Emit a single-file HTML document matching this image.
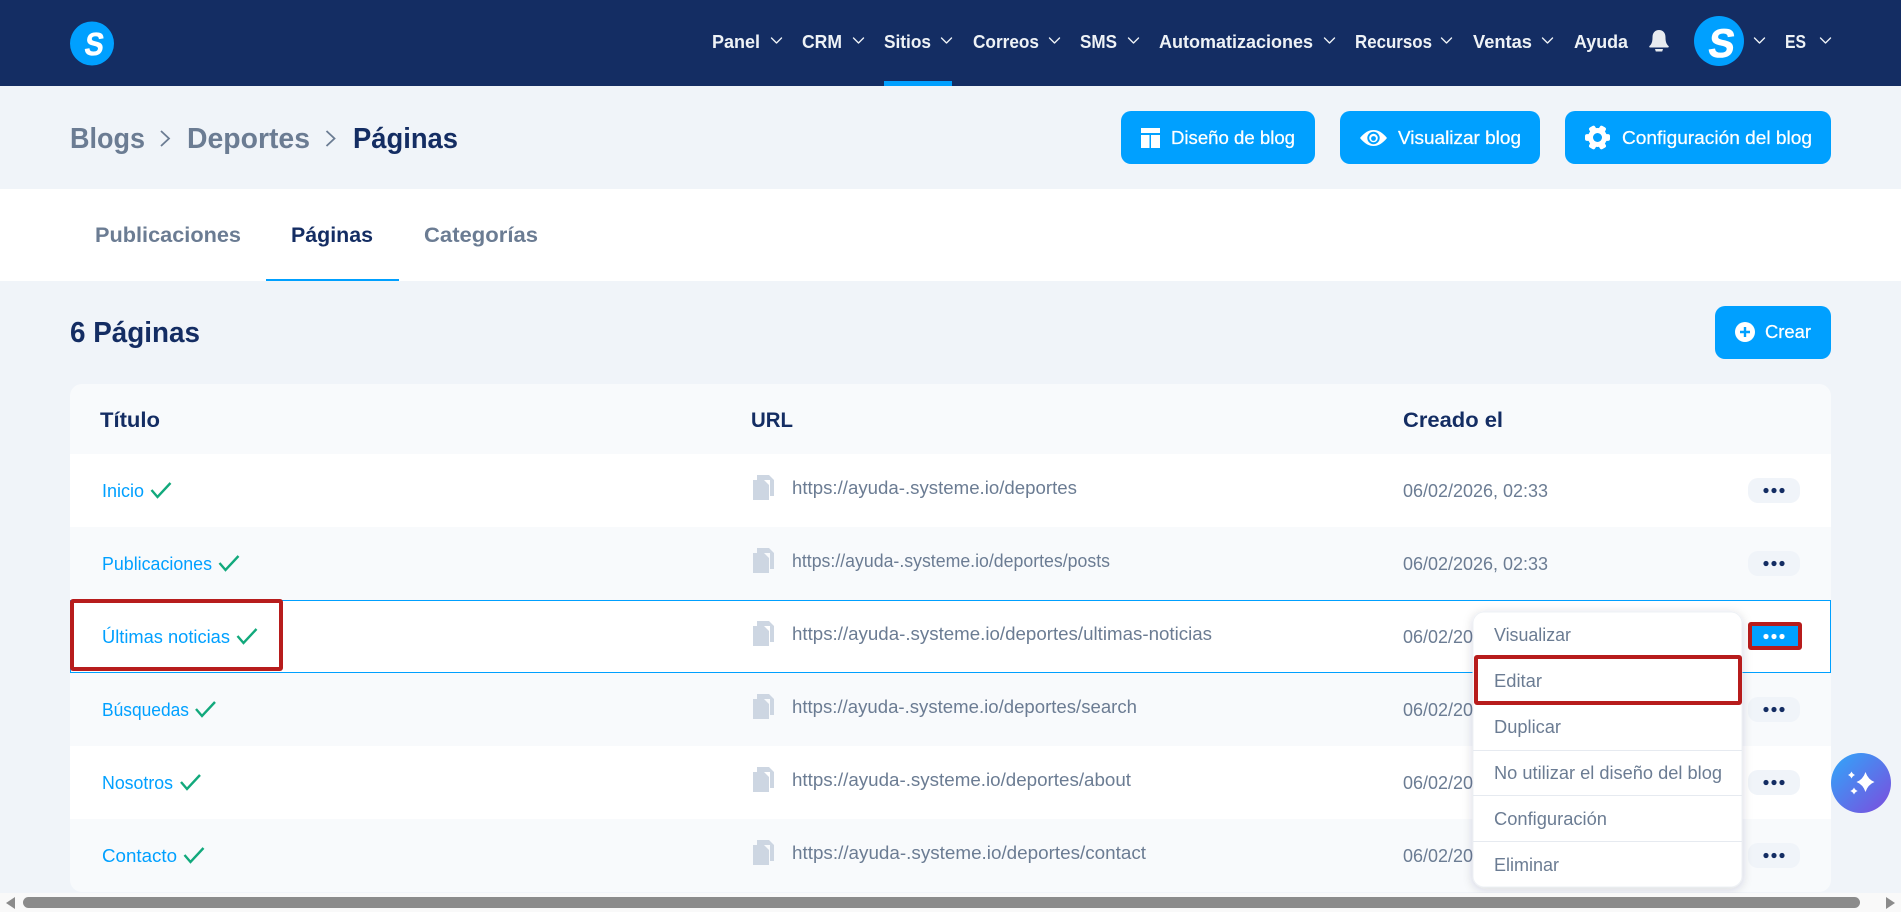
<!DOCTYPE html>
<html lang="es">
<head>
<meta charset="utf-8">
<title>Blogs - Deportes - Páginas</title>
<style>
html,body{margin:0;padding:0;width:1901px;height:912px;overflow:hidden;background:#f0f4f9}
svg{display:block}
text{font-family:"Liberation Sans",sans-serif;white-space:pre}
.nav{font-size:18px;font-weight:700;fill:#eef2f6}
.bc{font-size:29px;font-weight:700}
.g{fill:#6b7c93}
.d{fill:#142d63}
.btn{font-size:18px;fill:#fff;stroke:#fff;stroke-width:.25}
.tab{font-size:21px;font-weight:700}
.th{font-size:21px;font-weight:700;fill:#142d63}
.lnk{font-size:18px;fill:#00a0ff}
.url{font-size:18px;fill:#6b7c93}
.m{font-size:18px;fill:#6b7c93}
.chev{fill:none;stroke:#eef2f6;stroke-width:1.4;stroke-linecap:round;stroke-linejoin:round}
.ck{fill:none;stroke:#12a97c;stroke-width:2.4}
.c1{fill:#cdd6e2}
</style>
</head>
<body>
<svg width="1901" height="912" viewBox="0 0 1901 912" xmlns="http://www.w3.org/2000/svg">
<defs>
<filter id="sh" x="-10%" y="-10%" width="120%" height="120%"><feDropShadow dx="0" dy="2" stdDeviation="5" flood-color="#334" flood-opacity=".16"/></filter>
<linearGradient id="ai" x1="0" y1="0" x2="1" y2="1"><stop offset="0" stop-color="#2fa8fa"/><stop offset="1" stop-color="#7d4bdd"/></linearGradient>
<g id="cp"><path d="M757 475h12l5 5v16h-4v-16h-13z" class="c1"/><path d="M753 480h11l5 5v15h-16z" class="c1"/></g>
<g id="dots"><circle cx="1766" cy="0" r="2.6"/><circle cx="1774" cy="0" r="2.6"/><circle cx="1782" cy="0" r="2.6"/></g>
</defs>

<rect width="1901" height="912" fill="#f0f4f9"/>

<!-- nav -->
<rect width="1901" height="86" fill="#142d63"/>
<circle cx="92" cy="43.500" r="22" fill="#00a0ff"/>
<text transform="translate(83.500,55) skewX(-8)" x="0" y="0" fill="#fff" textLength="19" lengthAdjust="spacingAndGlyphs" style="font-size:32px;font-weight:700" stroke="#fff" stroke-width=".6">S</text>

<text class="nav" x="712" y="48" textLength="48" lengthAdjust="spacingAndGlyphs">Panel</text>
<path class="chev" d="M771.500 38l5 5 5-5"/>
<text class="nav" x="802" y="48" textLength="40" lengthAdjust="spacingAndGlyphs">CRM</text>
<path class="chev" d="M853.500 38l5 5 5-5"/>
<text class="nav" x="884" y="48" textLength="47" lengthAdjust="spacingAndGlyphs">Sitios</text>
<path class="chev" d="M941.500 38l5 5 5-5"/>
<rect x="884" y="81" width="68" height="5" fill="#00a0ff"/>
<text class="nav" x="973" y="48" textLength="66" lengthAdjust="spacingAndGlyphs">Correos</text>
<path class="chev" d="M1049.500 38l5 5 5-5"/>
<text class="nav" x="1080" y="48" textLength="37" lengthAdjust="spacingAndGlyphs">SMS</text>
<path class="chev" d="M1128.500 38l5 5 5-5"/>
<text class="nav" x="1159" y="48" textLength="154" lengthAdjust="spacingAndGlyphs">Automatizaciones</text>
<path class="chev" d="M1324.500 38l5 5 5-5"/>
<text class="nav" x="1355" y="48" textLength="77" lengthAdjust="spacingAndGlyphs">Recursos</text>
<path class="chev" d="M1441.500 38l5 5 5-5"/>
<text class="nav" x="1473" y="48" textLength="59" lengthAdjust="spacingAndGlyphs">Ventas</text>
<path class="chev" d="M1542.500 38l5 5 5-5"/>
<text class="nav" x="1574" y="48" textLength="54" lengthAdjust="spacingAndGlyphs">Ayuda</text>
<path d="M1649.500 46c2.200-2 3-4.500 3-8.500 0-4.800 2.600-7.500 6.500-7.500s6.500 2.700 6.500 7.500c0 4 .8 6.500 3 8.500 .6.600.2 1.500-.6 1.500h-17.800c-.8 0-1.200-.9-.6-1.500z" fill="#e8ebef"/>
<path d="M1655 49h8l-.8 2.500h-6.400z" fill="#e8ebef"/>
<circle cx="1719" cy="41" r="25" fill="#00a0ff"/>
<text transform="translate(1707,57) skewX(-8)" x="0" y="0" fill="#fff" textLength="26" lengthAdjust="spacingAndGlyphs" style="font-size:40px;font-weight:700" stroke="#fff" stroke-width=".8">S</text>
<path class="chev" d="M1754.500 38l5 5 5-5"/>
<text class="nav" x="1785" y="48" textLength="21" lengthAdjust="spacingAndGlyphs">ES</text>
<path class="chev" d="M1820.500 38l5 5 5-5"/>

<!-- breadcrumb -->
<text class="bc g" x="70" y="148" textLength="75" lengthAdjust="spacingAndGlyphs">Blogs</text>
<path d="M161 131l8 7.500-8 7.500" fill="none" stroke="#6b7c93" stroke-width="1.800"/>
<text class="bc g" x="187" y="148" textLength="123" lengthAdjust="spacingAndGlyphs">Deportes</text>
<path d="M326.500 131l8 7.500-8 7.500" fill="none" stroke="#6b7c93" stroke-width="1.800"/>
<text class="bc d" x="353" y="148" textLength="105" lengthAdjust="spacingAndGlyphs">Páginas</text>

<!-- header buttons -->
<rect x="1121" y="111" width="194" height="53" rx="10" fill="#00a0ff"/>
<path d="M1141 128h19v5h-19zM1141 135h8.500v13h-8.500zM1151 135h9v13h-9z" fill="#fff"/>
<text class="btn" x="1171" y="144" textLength="124" lengthAdjust="spacingAndGlyphs">Diseño de blog</text>

<rect x="1340" y="111" width="200" height="53" rx="10" fill="#00a0ff"/>
<path d="M1360 138c5-6 9-8 13.500-8s8.500 2 13.500 8c-5 6-9 8-13.500 8s-8.500-2-13.500-8z" fill="#fff"/>
<circle cx="1373.500" cy="138" r="6.200" fill="#00a0ff"/>
<circle cx="1373.500" cy="138" r="4.300" fill="#fff"/>
<circle cx="1373.500" cy="138.500" r="2.400" fill="#00a0ff"/>
<text class="btn" x="1398" y="144" textLength="123" lengthAdjust="spacingAndGlyphs">Visualizar blog</text>

<rect x="1565" y="111" width="266" height="53" rx="10" fill="#00a0ff"/>
<g fill="#fff" transform="translate(1597.500,137.500)">
<circle r="9.500"/>
<rect x="-12.500" y="-3.400" width="25" height="6.800" rx="2"/>
<rect x="-12.500" y="-3.400" width="25" height="6.800" rx="2" transform="rotate(60)"/>
<rect x="-12.500" y="-3.400" width="25" height="6.800" rx="2" transform="rotate(120)"/>
<circle r="4.500" fill="#00a0ff"/>
</g>
<text class="btn" x="1622" y="144" textLength="190" lengthAdjust="spacingAndGlyphs">Configuración del blog</text>

<!-- tabs -->
<rect x="0" y="189" width="1901" height="92" fill="#fff"/>
<text class="tab g" x="95" y="242" textLength="146" lengthAdjust="spacingAndGlyphs">Publicaciones</text>
<text class="tab d" x="291" y="242" textLength="82" lengthAdjust="spacingAndGlyphs">Páginas</text>
<text class="tab g" x="424" y="242" textLength="114" lengthAdjust="spacingAndGlyphs">Categorías</text>
<rect x="266" y="279" width="133" height="2" fill="#00a0ff"/>

<!-- title row -->
<text x="70" y="342" fill="#142d63" textLength="130" lengthAdjust="spacingAndGlyphs" style="font-size:29px;font-weight:700">6 Páginas</text>
<rect x="1715" y="306" width="116" height="53" rx="10" fill="#00a0ff"/>
<circle cx="1745" cy="332" r="10" fill="#fff"/>
<path d="M1745 327v10M1740 332h10" stroke="#00a0ff" stroke-width="2.400"/>
<text class="btn" x="1765" y="338" textLength="46" lengthAdjust="spacingAndGlyphs">Crear</text>

<!-- table -->
<path d="M70 396a12 12 0 0 1 12-12h1737a12 12 0 0 1 12 12v484a12 12 0 0 1-12 12h-1737a12 12 0 0 1-12-12z" fill="#f8fafc"/>
<rect x="70" y="454" width="1761" height="73" fill="#fff"/>
<rect x="70.500" y="600.500" width="1760" height="72" fill="#fff" stroke="#00a0ff" stroke-width="1"/>
<rect x="70" y="746" width="1761" height="73" fill="#fff"/>

<text class="th" x="100" y="427" textLength="60" lengthAdjust="spacingAndGlyphs">Título</text>
<text class="th" x="751" y="427" textLength="42" lengthAdjust="spacingAndGlyphs">URL</text>
<text class="th" x="1403" y="427" textLength="100" lengthAdjust="spacingAndGlyphs">Creado el</text>

<!-- row 1 -->
<text class="lnk" x="102" y="497" textLength="42" lengthAdjust="spacingAndGlyphs">Inicio</text>
<path class="ck" d="M151.500 490l6 7 13-14"/>
<use href="#cp"/>
<text class="url" x="792" y="494" textLength="285" lengthAdjust="spacingAndGlyphs">https://ayuda-.systeme.io/deportes</text>
<text class="url" x="1403" y="497" textLength="145" lengthAdjust="spacingAndGlyphs">06/02/2026, 02:33</text>
<rect x="1748" y="478" width="52" height="25" rx="10" fill="#f0f4f9"/>
<use href="#dots" y="490.500" fill="#142d63"/>

<!-- row 2 -->
<text class="lnk" x="102" y="570" textLength="110" lengthAdjust="spacingAndGlyphs">Publicaciones</text>
<path class="ck" d="M219.500 563l6 7 13-14"/>
<use href="#cp" y="73"/>
<text class="url" x="792" y="567" textLength="318" lengthAdjust="spacingAndGlyphs">https://ayuda-.systeme.io/deportes/posts</text>
<text class="url" x="1403" y="570" textLength="145" lengthAdjust="spacingAndGlyphs">06/02/2026, 02:33</text>
<rect x="1748" y="551" width="52" height="25" rx="10" fill="#f0f4f9"/>
<use href="#dots" y="563.500" fill="#142d63"/>

<!-- row 3 -->
<text class="lnk" x="102" y="643" textLength="128" lengthAdjust="spacingAndGlyphs">Últimas noticias</text>
<path class="ck" d="M237.500 636l6 7 13-14"/>
<use href="#cp" y="146"/>
<text class="url" x="792" y="640" textLength="420" lengthAdjust="spacingAndGlyphs">https://ayuda-.systeme.io/deportes/ultimas-noticias</text>
<text class="url" x="1403" y="643" textLength="145" lengthAdjust="spacingAndGlyphs">06/02/2026, 02:33</text>
<rect x="1752" y="626" width="46" height="20" fill="#00a0ff"/>
<use href="#dots" y="636.500" fill="#fff"/>

<!-- row 4 -->
<text class="lnk" x="102" y="716" textLength="87" lengthAdjust="spacingAndGlyphs">Búsquedas</text>
<path class="ck" d="M196 709l6 7 13-14"/>
<use href="#cp" y="219"/>
<text class="url" x="792" y="713" textLength="345" lengthAdjust="spacingAndGlyphs">https://ayuda-.systeme.io/deportes/search</text>
<text class="url" x="1403" y="716" textLength="145" lengthAdjust="spacingAndGlyphs">06/02/2026, 02:33</text>
<rect x="1748" y="697" width="52" height="25" rx="10" fill="#f0f4f9"/>
<use href="#dots" y="709.500" fill="#142d63"/>

<!-- row 5 -->
<text class="lnk" x="102" y="789" textLength="71" lengthAdjust="spacingAndGlyphs">Nosotros</text>
<path class="ck" d="M181 782l6 7 13-14"/>
<use href="#cp" y="292"/>
<text class="url" x="792" y="786" textLength="339" lengthAdjust="spacingAndGlyphs">https://ayuda-.systeme.io/deportes/about</text>
<text class="url" x="1403" y="789" textLength="145" lengthAdjust="spacingAndGlyphs">06/02/2026, 02:33</text>
<rect x="1748" y="770" width="52" height="25" rx="10" fill="#f0f4f9"/>
<use href="#dots" y="782.500" fill="#142d63"/>

<!-- row 6 -->
<text class="lnk" x="102" y="862" textLength="75" lengthAdjust="spacingAndGlyphs">Contacto</text>
<path class="ck" d="M184.500 855l6 7 13-14"/>
<use href="#cp" y="365"/>
<text class="url" x="792" y="859" textLength="354" lengthAdjust="spacingAndGlyphs">https://ayuda-.systeme.io/deportes/contact</text>
<text class="url" x="1403" y="862" textLength="145" lengthAdjust="spacingAndGlyphs">06/02/2026, 02:33</text>
<rect x="1748" y="843" width="52" height="25" rx="10" fill="#f0f4f9"/>
<use href="#dots" y="855.500" fill="#142d63"/>

<!-- red highlights under menu -->
<rect x="72" y="601" width="209" height="68" fill="none" stroke="#b71c1c" stroke-width="4" rx="1"/>
<rect x="1750" y="624" width="50" height="24" fill="none" stroke="#b71c1c" stroke-width="4" rx="1"/>

<!-- dropdown menu -->
<rect x="1473" y="612" width="269" height="275" rx="11" fill="#fff" stroke="#eef1f5" filter="url(#sh)"/>
<text class="m" x="1494" y="641" textLength="77" lengthAdjust="spacingAndGlyphs">Visualizar</text>
<text class="m" x="1494" y="687" textLength="48" lengthAdjust="spacingAndGlyphs">Editar</text>
<text class="m" x="1494" y="733" textLength="67" lengthAdjust="spacingAndGlyphs">Duplicar</text>
<rect x="1473" y="750" width="269" height="1" fill="#e6eaf0"/>
<text class="m" x="1494" y="779" textLength="228" lengthAdjust="spacingAndGlyphs">No utilizar el diseño del blog</text>
<rect x="1473" y="795" width="269" height="1" fill="#e6eaf0"/>
<text class="m" x="1494" y="825" textLength="113" lengthAdjust="spacingAndGlyphs">Configuración</text>
<rect x="1473" y="841" width="269" height="1" fill="#e6eaf0"/>
<text class="m" x="1494" y="871" textLength="65" lengthAdjust="spacingAndGlyphs">Eliminar</text>
<rect x="1476" y="657" width="264" height="46" fill="none" stroke="#b71c1c" stroke-width="4" rx="1"/>

<!-- AI button -->
<circle cx="1861" cy="783" r="30" fill="url(#ai)"/>
<path d="M1865.500 772Q1868 779.500 1874.500 782Q1868 784.500 1865.500 792Q1863 784.500 1856.500 782Q1863 779.500 1865.500 772z" fill="#fff"/>
<path d="M1851.500 771.500Q1852.500 774 1855 775Q1852.500 776 1851.500 778.500Q1850.500 776 1848 775Q1850.500 774 1851.500 771.500z" fill="#fff"/>
<path d="M1854 787.500Q1855 790 1857.700 791Q1855 792 1854 794.500Q1853 792 1850.300 791Q1853 790 1854 787.500z" fill="#fff"/>

<!-- horizontal scrollbar -->
<rect x="0" y="893" width="1901" height="19" fill="#f9f9f9"/>
<rect x="23" y="897" width="1837" height="11" rx="5.500" fill="#8b8b8b"/>
<path d="M15 897v12l-9-6z" fill="#8b8b8b"/>
<path d="M1886 897v12l9-6z" fill="#8b8b8b"/>
</svg>
</body>
</html>
